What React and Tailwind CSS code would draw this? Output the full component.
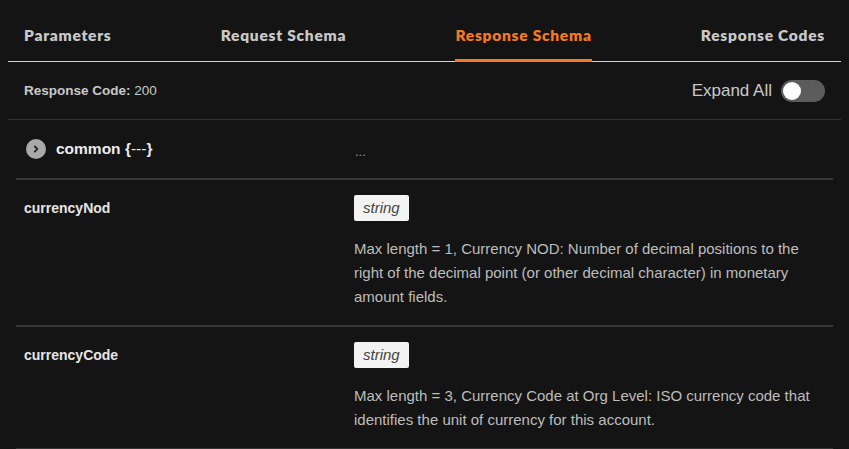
import React from "react";

const tabs = ["Parameters", "Request Schema", "Response Schema", "Response Codes"];

function Row({ name, desc }) {
  return (
    <div className="flex border-t-2 border-[#363636] px-2 pt-[15px] pb-4">
      <div className="w-[330px] shrink-0 text-[14px] font-bold leading-[26px] text-[#e6e6e6]">{name}</div>
      <div className="flex-1">
        <span className="inline-block rounded-[2px] bg-[#f3f3f3] px-[9px] text-[15px] italic leading-[26px] text-[#444]">string</span>
        <p className="mt-4 text-[15px] leading-[24px] text-[#bdbdbd]">{desc}</p>
      </div>
    </div>
  );
}

export default function App() {
  return (
    <div className="h-[449px] w-[849px] overflow-hidden bg-[#141414] px-2" style={{ fontFamily: '"Liberation Sans", Arial, sans-serif' }}>
      <div className="flex h-[62px] justify-between border-b border-[#d6d6d6] px-4" style={{ fontFamily: 'Lato, sans-serif' }}>
        {tabs.map((t) => (
          <div
            key={t}
            className={
              "-mb-px h-[62px] border-b-[3px] pt-[25px] text-[15.5px] font-extrabold leading-[20px] tracking-[0.75px] " +
              (t === "Response Schema" ? "border-[#f47a20] text-[#f47a20]" : "border-transparent text-[#c9c9c9]")
            }
          >
            {t}
          </div>
        ))}
      </div>
      <div className="flex h-[58px] items-center justify-between border-b border-[#333] px-4">
        <div className="text-[13.5px] leading-[20px] text-[#c9c9c9]">
          <span className="font-bold">Response Code:</span> 200
        </div>
        <div className="flex items-center gap-[9px]">
          <span className="text-[17px] leading-[22px] text-[#c9c9c9]">Expand All</span>
          <div className="flex h-[22px] w-[44px] items-center rounded-full bg-[#5c5c5c] px-[2px]">
            <div className="h-[18px] w-[18px] rounded-full bg-white" />
          </div>
        </div>
      </div>
      <div className="mx-2">
        <div className="flex h-[58px] items-center px-[10px]">
          <div className="flex w-[329px] shrink-0 items-center gap-[10px]">
            <div className="flex h-5 w-5 items-center justify-center rounded-full bg-[#a9a9a9]">
              <svg width="10" height="10" viewBox="0 0 10 10" fill="none" stroke="#1a1a1a" strokeWidth="1.7" strokeLinecap="round" strokeLinejoin="round">
                <path d="M3.8 2.3 L6.4 5 L3.8 7.7" />
              </svg>
            </div>
            <span className="text-[15.5px] font-bold leading-[20px] text-[#ececec]">
              common {"{"}<span className="font-normal">---</span>{"}"}
            </span>
          </div>
          <div className="pt-[6px] text-[13px] leading-[20px] text-[#9a9a9a]">...</div>
        </div>
        <Row
          name="currencyNod"
          desc="Max length = 1, Currency NOD: Number of decimal positions to the right of the decimal point (or other decimal character) in monetary amount fields."
        />
        <Row
          name="currencyCode"
          desc="Max length = 3, Currency Code at Org Level: ISO currency code that identifies the unit of currency for this account."
        />
        <div className="border-t-2 border-[#363636]" />
      </div>
    </div>
  );
}
